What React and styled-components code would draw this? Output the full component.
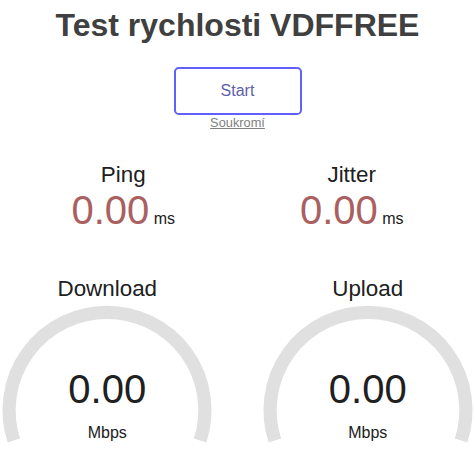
import React from "react";
import styled, { createGlobalStyle } from "styled-components";

const GlobalStyle = createGlobalStyle`
  html, body {
    margin: 0;
    padding: 0;
    border: none;
    overflow: hidden;
    background: #ffffff;
    color: #202020;
  }
  body {
    font-family: "Liberation Sans", Arial, sans-serif;
    font-size: 16px;
    text-align: center;
  }
`;

const Page = styled.div`
  display: flex;
  flex-direction: column;
  align-items: center;
  width: 100%;
`;

const Title = styled.h1`
  font-size: 32px;
  font-weight: bold;
  color: #404040;
  margin: 6.5px 0 23.5px;
  line-height: normal;
`;

const StartButton = styled.div`
  box-sizing: border-box;
  width: 128px;
  height: 48px;
  line-height: 43.2px;
  border: 2.4px solid #6060ff;
  border-radius: 4.8px;
  color: #6060aa;
  font-size: 16px;
  cursor: pointer;
`;

const PrivacyLink = styled.a`
  display: block;
  font-size: 12.8px;
  color: #808080;
  text-decoration: underline;
  line-height: normal;
`;

const Test = styled.div`
  width: 100%;
  margin-top: 32px;
  display: flex;
  flex-direction: column;
`;

const Group = styled.div`
  display: flex;
  justify-content: center;
  gap: 4.45px;
  width: 100%;
`;

const SmallArea = styled.div`
  flex: none;
  width: 224px;
  height: 112px;
  box-sizing: border-box;
  display: flex;
  flex-direction: column;
  align-items: center;
`;

const SmallName = styled.div`
  font-size: 22.4px;
  line-height: normal;
`;

const ValueRow = styled.div`
  display: flex;
  align-items: baseline;
  justify-content: center;
  gap: 4.45px;
`;

const SmallValue = styled.div`
  font-size: 40px;
  line-height: normal;
  color: #aa6060;
`;

const SmallUnit = styled.div`
  font-size: 16px;
`;

const GaugeArea = styled.div`
  flex: none;
  position: relative;
  width: 256px;
  height: 200px;
  box-sizing: border-box;
`;

const GaugeName = styled.div`
  position: absolute;
  top: 2.24px;
  left: 0;
  width: 100%;
  font-size: 22.4px;
  line-height: normal;
  z-index: 9;
`;

const GaugeValue = styled.div`
  position: absolute;
  bottom: 62px;
  left: 0;
  width: 100%;
  font-size: 40px;
  line-height: normal;
  z-index: 9;
`;

const GaugeUnit = styled.div`
  position: absolute;
  bottom: 32px;
  left: 0;
  width: 100%;
  font-size: 16px;
  line-height: normal;
  z-index: 9;
`;

const Meter = styled.svg`
  position: absolute;
  top: 0;
  left: 0;
  width: 100%;
  height: 100%;
  z-index: 1;
`;

function Gauge({ name }) {
  const w = 256;
  const h = 200;
  const s = h * 0.0055;
  const lw = 12 * s;
  const cx = w / 2;
  const cy = h - 58 * s;
  const r = h / 1.8 - lw;
  const a0 = -Math.PI * 1.1;
  const a1 = Math.PI * 0.1;
  const x0 = cx + r * Math.cos(a0);
  const y0 = cy + r * Math.sin(a0);
  const x1 = cx + r * Math.cos(a1);
  const y1 = cy + r * Math.sin(a1);
  const d = `M ${x0} ${y0} A ${r} ${r} 0 1 1 ${x1} ${y1}`;
  return (
    <GaugeArea>
      <GaugeName>{name}</GaugeName>
      <Meter viewBox={`0 0 ${w} ${h}`}>
        <path d={d} fill="none" stroke="#e0e0e0" strokeWidth={lw} />
      </Meter>
      <GaugeValue>0.00</GaugeValue>
      <GaugeUnit>Mbps</GaugeUnit>
    </GaugeArea>
  );
}

function Small({ name }) {
  return (
    <SmallArea>
      <SmallName>{name}</SmallName>
      <ValueRow>
        <SmallValue>0.00</SmallValue>
        <SmallUnit>ms</SmallUnit>
      </ValueRow>
    </SmallArea>
  );
}

export default function App() {
  return (
    <>
      <GlobalStyle />
      <Page>
        <Title>Test rychlosti VDFFREE</Title>
        <StartButton>Start</StartButton>
        <PrivacyLink href="#">Soukromí</PrivacyLink>
        <Test>
          <Group>
            <Small name="Ping" />
            <Small name="Jitter" />
          </Group>
          <Group>
            <Gauge name="Download" />
            <Gauge name="Upload" />
          </Group>
        </Test>
      </Page>
    </>
  );
}
